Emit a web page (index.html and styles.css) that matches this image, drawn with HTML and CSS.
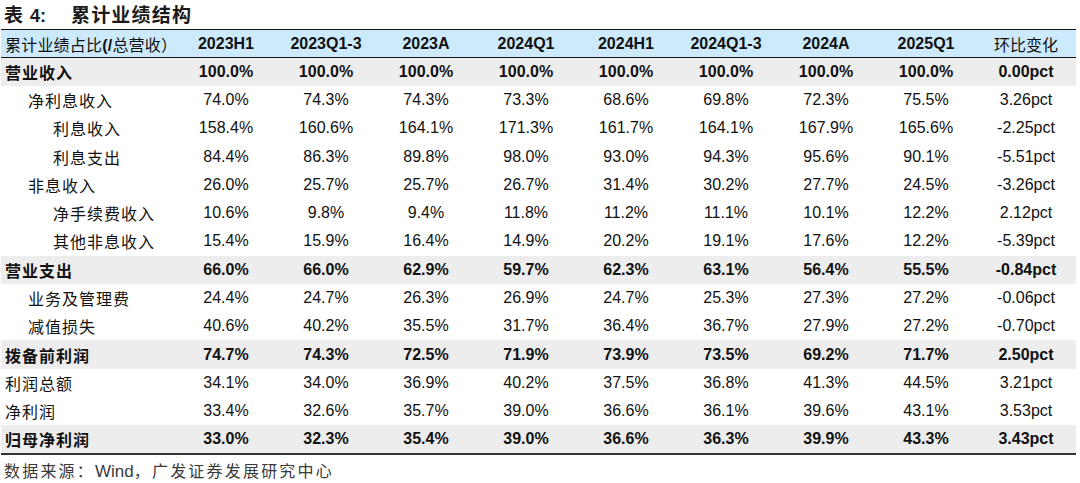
FILE: index.html
```html
<!DOCTYPE html>
<html lang="zh-CN">
<head>
<meta charset="utf-8">
<title>表 4：累计业绩结构</title>
<link rel="stylesheet" href="styles.css">
</head>
<body>
<div class="page">
  <h1 class="title">表 <span class="lat">4:</span><span class="title-text">累计业绩结构</span></h1>
  <table class="perf">
    <colgroup>
      <col class="c-label">
      <col class="c-val"><col class="c-val"><col class="c-val"><col class="c-val"><col class="c-val"><col class="c-val"><col class="c-val"><col class="c-val"><col class="c-val">
    </colgroup>
    <thead>
      <tr>
        <th class="label">累计业绩占比<span class="lat">(/</span>总营收）</th>
        <th>2023H1</th><th>2023Q1-3</th><th>2023A</th><th>2024Q1</th><th>2024H1</th><th>2024Q1-3</th><th>2024A</th><th>2025Q1</th><th class="cjk">环比变化</th>
      </tr>
    </thead>
    <tbody>
      <tr class="key"><td class="label">营业收入</td><td>100.0%</td><td>100.0%</td><td>100.0%</td><td>100.0%</td><td>100.0%</td><td>100.0%</td><td>100.0%</td><td>100.0%</td><td>0.00pct</td></tr>
      <tr><td class="label l1">净利息收入</td><td>74.0%</td><td>74.3%</td><td>74.3%</td><td>73.3%</td><td>68.6%</td><td>69.8%</td><td>72.3%</td><td>75.5%</td><td>3.26pct</td></tr>
      <tr><td class="label l2">利息收入</td><td>158.4%</td><td>160.6%</td><td>164.1%</td><td>171.3%</td><td>161.7%</td><td>164.1%</td><td>167.9%</td><td>165.6%</td><td>-2.25pct</td></tr>
      <tr><td class="label l2">利息支出</td><td>84.4%</td><td>86.3%</td><td>89.8%</td><td>98.0%</td><td>93.0%</td><td>94.3%</td><td>95.6%</td><td>90.1%</td><td>-5.51pct</td></tr>
      <tr><td class="label l1">非息收入</td><td>26.0%</td><td>25.7%</td><td>25.7%</td><td>26.7%</td><td>31.4%</td><td>30.2%</td><td>27.7%</td><td>24.5%</td><td>-3.26pct</td></tr>
      <tr><td class="label l2">净手续费收入</td><td>10.6%</td><td>9.8%</td><td>9.4%</td><td>11.8%</td><td>11.2%</td><td>11.1%</td><td>10.1%</td><td>12.2%</td><td>2.12pct</td></tr>
      <tr><td class="label l2">其他非息收入</td><td>15.4%</td><td>15.9%</td><td>16.4%</td><td>14.9%</td><td>20.2%</td><td>19.1%</td><td>17.6%</td><td>12.2%</td><td>-5.39pct</td></tr>
      <tr class="key"><td class="label">营业支出</td><td>66.0%</td><td>66.0%</td><td>62.9%</td><td>59.7%</td><td>62.3%</td><td>63.1%</td><td>56.4%</td><td>55.5%</td><td>-0.84pct</td></tr>
      <tr><td class="label l1">业务及管理费</td><td>24.4%</td><td>24.7%</td><td>26.3%</td><td>26.9%</td><td>24.7%</td><td>25.3%</td><td>27.3%</td><td>27.2%</td><td>-0.06pct</td></tr>
      <tr><td class="label l1">减值损失</td><td>40.6%</td><td>40.2%</td><td>35.5%</td><td>31.7%</td><td>36.4%</td><td>36.7%</td><td>27.9%</td><td>27.2%</td><td>-0.70pct</td></tr>
      <tr class="key"><td class="label">拨备前利润</td><td>74.7%</td><td>74.3%</td><td>72.5%</td><td>71.9%</td><td>73.9%</td><td>73.5%</td><td>69.2%</td><td>71.7%</td><td>2.50pct</td></tr>
      <tr><td class="label">利润总额</td><td>34.1%</td><td>34.0%</td><td>36.9%</td><td>40.2%</td><td>37.5%</td><td>36.8%</td><td>41.3%</td><td>44.5%</td><td>3.21pct</td></tr>
      <tr><td class="label">净利润</td><td>33.4%</td><td>32.6%</td><td>35.7%</td><td>39.0%</td><td>36.6%</td><td>36.1%</td><td>39.6%</td><td>43.1%</td><td>3.53pct</td></tr>
      <tr class="key last"><td class="label">归母净利润</td><td>33.0%</td><td>32.3%</td><td>35.4%</td><td>39.0%</td><td>36.6%</td><td>36.3%</td><td>39.9%</td><td>43.3%</td><td>3.43pct</td></tr>
    </tbody>
  </table>
  <p class="source">数据来源：<span class="lat">Wind</span>，广发证券发展研究中心</p>
</div>
</body>
</html>
```

FILE: styles.css
```css
html, body {
  margin: 0;
  padding: 0;
  background: #ffffff;
}

.page {
  width: 1080px;
  color: #111111;
  font-family: "Liberation Sans", Arial, "Noto Sans CJK SC", sans-serif;
}

.lat {
  font-family: "Liberation Sans", Arial, sans-serif;
}

.title {
  margin: 0;
  height: 29px;
  line-height: 27px;
  padding-left: 4px;
  font-size: 19px;
  font-weight: bold;
  letter-spacing: 1.3px;
  color: #1a1a1a;
  font-family: "Noto Sans CJK SC", sans-serif;
}

.title .lat {
  font-size: 18px;
  letter-spacing: 0;
}

.title-text {
  margin-left: 25px;
  letter-spacing: 1.2px;
}

.perf {
  margin-left: 1px;
  width: 1075px;
  table-layout: fixed;
  border-collapse: collapse;
  border-spacing: 0;
  font-size: 16px;
}

.c-label { width: 175px; }
.c-val { width: 100px; }

.perf thead tr {
  height: 28px;
  background: #cdeafc;
  border-top: 1.5px solid #111111;
  border-bottom: 1.5px solid #111111;
}

.perf th {
  padding: 0;
  text-align: center;
  font-weight: bold;
  white-space: nowrap;
  font-family: "Liberation Sans", Arial, sans-serif;
}

.perf th.label,
.perf th.cjk {
  font-weight: normal;
  font-family: "Noto Sans CJK SC", sans-serif;
}

.perf th.label {
  letter-spacing: 0.2px;
}

.perf th.label .lat {
  font-weight: bold;
}

.perf tbody tr {
  height: 28.3px;
}

.perf td {
  padding: 0;
  text-align: center;
  white-space: nowrap;
  font-family: "Liberation Sans", Arial, sans-serif;
}

.perf .label {
  text-align: left;
  padding-left: 4px;
  font-family: "Noto Sans CJK SC", sans-serif;
}

.perf td.label {
  letter-spacing: 1px;
}

.perf td.l1 { padding-left: 27px; }
.perf td.l2 { padding-left: 52px; }

.perf tr.key {
  background: #ededed;
  font-weight: bold;
}

.perf tr.last {
  border-bottom: 2px solid #333333;
}

.source {
  margin: 0;
  padding-left: 4px;
  height: 26px;
  line-height: 30px;
  font-size: 16px;
  letter-spacing: 2.2px;
  color: #3a3a3a;
  font-family: "Noto Sans CJK SC", sans-serif;
}

.source .lat {
  letter-spacing: 0;
  font-size: 17px;
}
```
